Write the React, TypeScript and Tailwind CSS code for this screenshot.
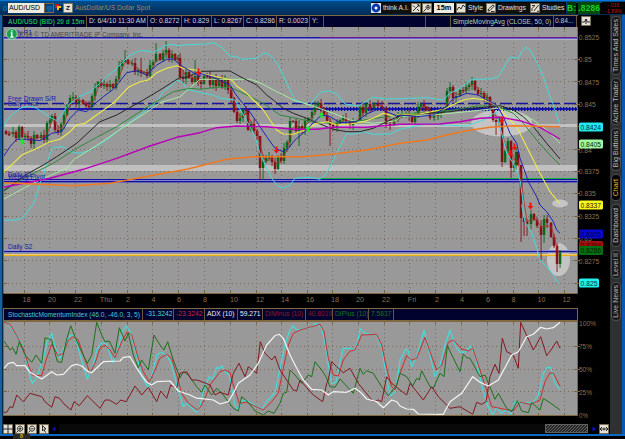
import React from "react";

type Piece = [number, number, string];

const FONT = "'Liberation Sans', Arial, sans-serif";

/* Each piece holds an origin and a list of points in thirds of a pixel. */
function toPoints(pieces: Piece[]): string {
  return pieces
    .map(([ox, oy, s]) =>
      s
        .trim()
        .split(/\s+/)
        .map((p) => {
          const [x, y] = p.split(",").map(Number);
          return `${(ox + x / 3).toFixed(1)},${(oy + y / 3).toFixed(1)}`;
        })
        .join(" ")
    )
    .join(" ");
}

interface Series {
  color: string;
  width: number;
  pieces: Piece[];
}

const overlays: Series[] = [
  { color: "#45dada", width: 1, pieces: [
    [0, 100, "10,78 30,50 60,25 90,18 110,25 155,55 170,62 185,45 200,20"],
    [0, 0, "232,293 270,275 300,250 320,230 345,210 365,190 390,165 420,152 440,153 460,157 480,147 495,137 515,133 540,137 560,134"],
    [200, 0, "0,133 20,132 40,128 60,138 90,168 110,170 125,178 170,175 190,160 200,160 215,170 235,195 260,250 285,300 330,315 345,295 365,275 390,273 410,282 435,312 475,318 520,292 560,297"],
    [400, 0, "0,296 80,293 130,300 150,280 180,265 215,238 270,237 295,230 310,205 330,172 355,175 365,155 378,142 390,150 410,185 430,230 450,290 458,310 468,340 480,375"]] },
  { color: "#45dada", width: 1, pieces: [
    [0, 205, "10,45 40,46 60,42 75,32 85,15 98,0"],
    [0, 100, "105,300 120,250 135,210 150,160 160,142 190,140 210,155 240,160 270,150 320,120 370,80 440,30"],
    [0, 0, "470,305 490,275 510,260 530,240 550,250 560,268 590,275"],
    [200, 0, "0,278 40,285 60,295 90,298"],
    [200, 100, "105,0 130,45 150,80 165,110 180,160 200,205 215,235 235,260 250,264 270,255 285,235 330,232 360,238 380,220 400,180 420,140 440,100 455,103 490,95 520,103 570,102"],
    [400, 100, "0,88 30,82 60,75 80,72 130,75 200,78 250,60 290,35 300,80 320,160 340,190 360,240 370,310"],
    [400, 205, "365,0 375,50 395,85 410,130 420,165 440,185 460,210 475,235"]] },
  { color: "#a8eaa0", width: 1, pieces: [
    [0, 100, "10,298 80,260 120,240 200,205 220,180 300,130 380,75 450,30 480,8"],
    [0, 0, "540,290 580,255"],
    [200, 0, "0,238 60,238 150,238 180,248 230,275 285,302 330,315"],
    [200, 100, "400,40 450,60 520,70 590,62"],
    [400, 100, "0,50 100,45 200,35 290,25 340,35 400,60 440,90 480,130"]] },
  { color: "#2c8a38", width: 1, pieces: [
    [0, 100, "10,275 60,240 110,215 160,190 230,145 290,112 350,80 420,35"],
    [0, 0, "460,310 520,275 570,265"],
    [200, 0, "0,268 50,262 90,262 120,275 160,295"],
    [200, 100, "190,10 240,45 290,55 330,65 400,70 480,62 560,50"],
    [400, 100, "0,42 80,38 160,30 230,18 290,18 340,40 370,70 410,120 450,165 480,195"]] },
  { color: "#26262a", width: 1, pieces: [
    [0, 100, "10,272 50,245 85,220 130,195 170,170 230,130 300,65 350,45"],
    [0, 0, "430,300 480,270 540,232 560,232 590,218"],
    [200, 0, "0,214 90,213 130,235 170,255 200,285"],
    [200, 100, "220,0 250,25 280,40 320,55 360,72 400,88 440,95 480,95 520,85 570,60"],
    [400, 100, "0,48 80,40 150,35 220,25 300,17 340,30 370,50 400,80 440,130 480,177"]] },
  { color: "#eeea48", width: 1.1, pieces: [
    [0, 100, "10,217 40,190 65,165 105,148 150,125 180,118 210,95 230,75 255,70 290,45"],
    [0, 0, "345,305 385,262 420,245 445,240 470,218 500,205 530,197 550,205 600,212"],
    [200, 0, "0,220 40,228 95,240 110,258 140,280"],
    [200, 100, "160,0 190,30 210,60 230,90 250,102 280,103 320,88 350,70 385,65 410,75 450,72 490,65 520,55 550,40 580,48"],
    [400, 100, "0,43 60,42 130,28 190,0 220,-5 255,0 290,15 320,50 350,80 380,140 420,220 450,275 480,312"]] },
  { color: "#2020b4", width: 1, pieces: [
    [0, 100, "10,170 30,140 50,118 80,118 120,122 155,100 185,95 210,55 235,30 260,35 280,15"],
    [0, 0, "310,290 340,268 355,250 380,218 410,212 440,225 470,195 500,178 520,177 545,198 575,215 600,230"],
    [200, 0, "0,220 40,232 90,255 105,280"],
    [200, 100, "120,0 145,30 170,65 200,110 225,145 250,155 265,145 285,120 320,90 340,68 365,45 390,50 420,68 470,65 500,42 540,25 560,35 590,48"],
    [400, 100, "0,45 50,50 100,45 140,20 160,-5 200,-20 235,-15 260,0 290,15 310,50 330,100 350,130 360,175 375,215 385,245 410,290"],
    [400, 205, "420,0 440,20 460,50 470,75 480,85"]] },
  { color: "#b800b8", width: 1.4, pieces: [
    [0, 100, "10,262 80,248 150,235 250,208 350,175 450,138 530,112"],
    [200, 100, "0,98 50,83 110,78 200,80 280,88 350,88 400,82 500,82"],
    [400, 100, "0,73 120,72 180,65 240,55 300,52 360,62 420,82 480,117"]] },
  { color: "#f07820", width: 1.4, pieces: [
    [0, 100, "10,248 100,252 220,257 330,250 400,237 480,222 560,208"],
    [200, 100, "0,198 80,178 160,170 310,170 400,162 500,150 560,138"],
    [400, 100, "0,130 80,120 140,105 200,92 270,82 340,77 480,80"]] },
];

const studies: Series[] = [
  { color: "#45dada", width: 1.2, pieces: [
    [0, 305, "12,52 25,55 45,85 65,115 80,170 90,215 97,235 110,218 130,160 140,115 155,85 165,125 180,160 195,120 212,90 225,95 240,150 262,222 280,180 290,135 305,112 320,118 338,172 355,130 365,85 378,62 390,80 410,150 425,215 445,248 460,195 470,150 482,142 500,150 515,180 530,240 550,305 560,295 590,322 600,305"],
    [200, 305, "8,265 15,245 28,215 38,222 50,188 60,190 66,182 75,200 88,210 95,250 105,300 115,315 125,285 145,290 185,312 205,285 225,262 240,190 255,120 268,80 278,62 290,75 330,68 350,55 365,70 378,130 388,200 395,235 408,232 420,170 430,130 450,130 465,137 475,100 480,70 495,85 530,90 545,130 560,220 570,272 585,262 598,185"],
    [400, 305, "0,165 18,132 25,138 35,185 50,155 72,75 85,130 105,215 120,180 135,120 150,75 165,120 180,142 200,140 210,122 225,150 245,240 262,300 278,330 290,308 305,325 320,312 333,328 345,290 370,295 400,292 415,270 430,205 440,188 452,187 465,235 480,255"]] },
  { color: "#c83030", width: 1, pieces: [
    [0, 305, "12,52 30,58 50,92 70,130 85,180 97,210 125,212 140,160 155,118 175,152 190,145 205,105 220,95 235,105 250,150 270,203 285,175 300,130 315,120 330,135 345,158 365,110 382,80 395,90 415,160 430,200 448,232 465,195 480,160 500,148 515,160 530,210 545,265 565,295 592,315"],
    [200, 305, "0,308 15,280 30,240 60,200 75,195 90,202 100,240 118,295 140,292 190,315 215,290 235,265 250,190 265,120 280,85 300,75 360,58 372,80 385,160 400,210 415,213 430,165 450,138 465,135 485,90 530,88 545,120 560,190 575,245 585,255"],
    [400, 305, "0,205 20,152 35,165 50,160 75,97 90,140 110,195 125,180 145,112 160,105 185,132 205,138 218,130 235,180 255,240 275,305 300,310 340,318 360,292 390,298 420,285 435,230 450,203 460,205 480,243"]] },
  { color: "#1c701c", width: 1, pieces: [
    [0, 305, "12,108 30,135 38,128 48,148 58,110 75,150 95,172 108,150 125,175 135,98 155,105 172,170 185,172 198,110 212,62 225,95 240,130 262,175 275,150 290,52 305,90 315,110 328,108 345,145 358,68 375,108 385,85 400,150 415,188 425,165 445,195 462,90 480,120 492,135 503,110 520,165 540,218 550,200 565,210 590,245"],
    [200, 305, "5,262 15,240 35,270 50,250 70,270 100,310 115,318 125,275 145,292 165,318 190,330 205,318 222,325 240,295 250,265 260,262 270,195 285,210 305,235 325,210 335,215 345,170 365,195 378,215 390,245 405,247 420,222 460,265 480,190 490,208 500,197 520,205 545,245 565,272 590,240"],
    [400, 305, "0,205 20,215 38,243 50,220 58,225 65,197 90,245 100,250 120,205 132,215 142,122 180,200 190,147 200,158 210,160 240,215 255,210 285,283 295,265 320,310 335,320 352,287 365,318 385,323 395,293 420,315 430,280 450,293 480,315"]] },
  { color: "#841820", width: 1, pieces: [
    [0, 305, "12,322 20,322 30,305 38,308 50,270 70,290 90,265 125,275 135,290 155,307 165,275 178,280 195,300 213,315 222,290 238,302 262,272 300,310 315,285 328,285 350,298 362,285 378,290 390,270 405,243 425,270 445,247 470,290 482,258 500,280 512,240 530,250 540,205 560,200 575,225 590,225"],
    [200, 305, "0,228 30,240 45,270 60,262 85,270 100,205 117,175 135,215 145,185 170,205 181,110 195,145 215,165 225,153 240,195 280,255 290,258 300,225 340,270 368,290 380,235 385,225 395,170 410,185 430,203 450,190 475,235 495,260 520,290 535,285 545,290 560,215 575,235"],
    [400, 305, "0,255 20,270 30,235 70,285 95,245 115,275 150,310 180,305 218,328 230,292 245,298 258,290 270,215 285,178 297,205 307,100 320,140 340,150 355,190 362,52 400,135 422,95 440,152 455,132 470,108 480,130"]] },
  { color: "#f4f4f4", width: 1.2, pieces: [
    [0, 305, "12,190 25,175 40,172 50,182 75,182 90,202 125,222 155,200 170,210 190,208 215,182 230,178 245,183 265,200 275,203 310,170 360,168 370,157 390,155 410,190 440,232 455,240 470,230 510,228 535,258 570,270 590,280"],
    [200, 305, "0,280 40,285 60,297 85,290 100,265 115,235 150,210 175,175 200,120 225,92 238,88 250,100 270,150 290,190 310,225 335,253 365,255 385,270 400,260 440,262 465,250 480,260 500,282 530,290 550,308 575,285 590,290"],
    [400, 305, "0,303 20,312 40,313 55,327 130,328 150,290 185,265 218,215 240,232 265,243 295,225 335,150 355,140 380,95 400,88 422,67 440,72 460,68 480,52"]] },
];

const closes =
  "3:131 6:134 9:134 13:132 16:138 19:127 22:137 25:136 28:138 31:144 34:135 37:138 41:135 44:140 47:123 50:120 52:116 55:130 58:132 61:124 64:115 67:105 70:98 73:97 76:103 79:100 83:104 86:106 89:107 92:96 95:87 98:82 101:86 104:84 107:87 110:84 113:88 116:79 119:66 122:62 125:60 128:64 132:63 135:72 138:70 141:73 144:72 147:76 150:65 153:62 156:54 160:60 163:53 166:50 169:58 172:54 175:60 178:58 180:77 183:79 186:72 189:78 192:82 195:76 198:82 201:84 204:76 207:76 210:85 213:78 216:86 219:78 222:87 225:80 228:90 231:98 234:112 237:121 240:118 243:110 246:110 248:130 251:124 254:131 257:136 260:168 263:161 266:158 269:157 272:162 275:169 278:156 281:161 284:148 287:142 290:121 293:121 296:131 299:126 302:130 305:121 308:118 312:112 315:106 318:103 321:108 324:115 327:121 330:125 333:127 337:123 340:120 343:118 346:121 350:125 353:122 356:121 360:107 363:113 366:104 370:108 374:103 378:106 382:108 386:124 390:125 394:120 398:115 402:114 406:113 409:116 412:122 415:115 418:107 421:104 424:107 427:110 430:118 434:116 438:113 441:112 444:108 447:91 450:87 453:98 456:96 460:90 463:91 466:87 469:85 472:81 475:90 478:94 481:93 484:98 487:97 490:108 493:120 496:122 499:118 502:162 505:151 508:141 511:168 514:165 516:152 518:165 521:218 524:222 527:224 531:214 534:220 537:226 541:235 544:219 547:223 551:237 554:246 557:264 560:252"
    .split(" ")
    .map((s) => s.split(":").map(Number));

const bigWicks: Record<number, [number, number]> = {
  19: [125, 139], 52: [114, 121], 125: [50, 62], 141: [58, 77], 156: [43, 60], 166: [41, 58], 183: [70, 84],
  195: [60, 84], 260: [140, 180], 263: [155, 180], 299: [120, 146], 330: [118, 146],
  502: [122, 167], 511: [140, 178], 521: [172, 242], 524: [217, 236], 527: [219, 236], 541: [220, 260],
  544: [215, 243], 557: [243, 272], 560: [250, 268], 496: [115, 135],
};

const vGrid = [24.5, 49.5, 75.5, 101.5, 127.5, 152.5, 178.5, 204.5, 230.5, 256.5, 281.5, 307.5, 332.5, 358.5, 384.5, 409.5, 435.5, 461.5, 487.5, 513.5, 538.5, 564.5];
const hGrid = [59.5, 81.5, 104.5, 126.5, 149.5, 171.5, 193.5, 216.5, 238.5, 260.5, 283.5];

const hours: [string, number][] = [
  ["18", 26.5], ["20", 52], ["22", 78], ["Thu", 106], ["2", 128], ["4", 153.5], ["6", 179], ["8", 205], ["10", 234], ["12", 260], ["14", 285],
  ["16", 310], ["18", 335], ["20", 360], ["22", 386], ["Fri", 412], ["2", 437], ["4", 462], ["6", 488], ["8", 513.5], ["10", 541.5], ["12", 566.5],
];

const prices: [string, number][] = [
  ["0.8525", 37.3], ["0.85", 59.5], ["0.8475", 82], ["0.845", 104.3], ["0.84", 150], ["0.8375", 171.8], ["0.835", 193.7], ["0.8325", 216.6], ["0.83", 238.8], ["0.8275", 261],
];

const tags: [string, number, string, string, number][] = [
  ["0.8424", 127, "#20e8f0", "#003040", 24],
  ["0.8405", 144, "#a0f8a0", "#083008", 24],
  ["0.8337", 205, "#f8f820", "#202000", 24],
  ["0.8305", 234, "#0808d0", "#000050", 24],
  ["0.8294", 245.5, "#a01010", "#400000", 24],
  ["0.8286", 250.5, "#087010", "#001c00", 24],
  ["0.825", 283, "#20f0f0", "#003040", 20],
];

const len: Record<number, number> = { 4: 13, 5: 17, 6: 20.5 };

function Arrow({ x, y, up }: { x: number; y: number; up?: boolean }) {
  return (
    <path
      d={up ? "M0,-3 L3,0 H1.2 V3 H-1.2 V0 H-3 Z" : "M0,3.5 L3,0 H1 V-3.5 H-1 V0 H-3 Z"}
      transform={`translate(${x},${y})`}
      fill={up ? "#18e828" : "#f01010"}
    />
  );
}

function PriceChart() {
  return (
    <svg width="607" height="280" viewBox="3 27 607 280" className="block shrink-0" fontFamily={FONT}>
      <rect x="3" y="27" width="607" height="280" fill="#000" />
      <rect x="3.5" y="27" width="574" height="266" fill="#999999" />
      <g stroke="#6c5840" strokeWidth="1" strokeDasharray="1 3" opacity="0.7">
        {vGrid.map((x) => <line key={x} x1={x} x2={x} y1="27" y2="293" />)}
        {hGrid.map((y) => <line key={y} x1="4" x2="577" y1={y} y2={y} />)}
      </g>
      <g stroke="#7a6038">
        {vGrid.map((x) => <path key={x} d={`M${x},27v3M${x},290v3`} />)}
        {hGrid.map((y) => <path key={y} d={`M4,${y}h3M574,${y}h6`} />)}
      </g>
      <rect x="4" y="124" width="573" height="3" fill="#c2c2c2" />
      <rect x="4" y="165" width="573" height="6" fill="#c0c0c0" />
      <ellipse cx="501.7" cy="123" rx="30.5" ry="13.5" fill="#c4c4c4" />
      <ellipse cx="560" cy="203.5" rx="8" ry="4" fill="#c4c4c4" />
      <ellipse cx="558.5" cy="259.5" rx="11.5" ry="16.5" fill="#c4c4c4" />

      <rect x="4" y="37" width="573" height="1" fill="#1818a8" />
      <rect x="4" y="38" width="573" height="1" fill="#6a62c0" />
      <rect x="320" y="37" width="257" height="1" fill="#6c1890" />
      <rect x="4" y="39" width="573" height="1" fill="#b4b0c8" />
      <line x1="4" x2="577" y1="103.5" y2="103.5" stroke="#1414a0" strokeWidth="1.4" strokeDasharray="12 4" />
      <rect x="4" y="108" width="573" height="2" fill="#1616b0" />
      <line x1="320" x2="577" y1="109" y2="109" stroke="#1010a0" strokeWidth="4" strokeDasharray="1.3 1.7" />
      <rect x="320" y="178" width="257" height="1" fill="#10b838" />
      <rect x="4" y="179" width="573" height="1" fill="#1414a0" />
      <rect x="4" y="180" width="573" height="1" fill="#8484cc" />
      <rect x="4" y="181" width="573" height="1" fill="#1010a0" />
      <rect x="4" y="182" width="573" height="1" fill="#6464b0" />
      <rect x="4" y="250" width="573" height="1" fill="#8c8cd0" />
      <rect x="4" y="251" width="573" height="1" fill="#141498" />
      <rect x="4" y="252" width="573" height="1" fill="#8484b8" />
      <rect x="4" y="254" width="573" height="1" fill="#e8cc78" />
      <rect x="4" y="255" width="573" height="1" fill="#eeae18" />

      {closes.slice(1).map(([x, y], i) => {
        const prev = closes[i][1];
        const w = bigWicks[x];
        const top = Math.min(prev, y);
        const bottom = Math.max(prev, y);
        const hi = w ? w[0] : top - 1 - ((i * 7) % 5);
        const lo = w ? w[1] : bottom + 1 + ((i * 11) % 5);
        const color = y < prev ? "#086818" : "#841018";
        return (
          <g key={i} fill={color}>
            <rect x={x - 0.4} y={hi} width="0.9" height={lo - hi} />
            <rect x={x - 1.2} y={top} width="2.5" height={Math.max(1.2, bottom - top)} />
          </g>
        );
      })}
      <polyline
        points={closes.slice(1).map(([x, y], i) => `${x},${(y + closes[i][1] + closes[Math.max(0, i - 1)][1]) / 3}`).join(" ")}
        fill="none" stroke="#b42828" strokeWidth="0.8" />
      {overlays.map((s, i) => (
        <polyline key={i} points={toPoints(s.pieces)} fill="none" stroke={s.color} strokeWidth={s.width} strokeLinejoin="round" />
      ))}

      <Arrow x={22} y={141.5} up />
      <Arrow x={308} y={129} up />
      <Arrow x={321.5} y={115} up />
      <Arrow x={198.5} y={72} />
      <Arrow x={276.5} y={150} />
      <Arrow x={501.7} y={120} />
      <Arrow x={514.5} y={147} />
      <Arrow x={510.5} y={153.5} />
      <Arrow x={530.5} y={206} />

      <g fontSize="7.2" fill="#1818a8">
        <text x="8" y="34.5" textLength="24" lengthAdjust="spacingAndGlyphs">Daily R1</text>
        <text x="8" y="100.8" textLength="48" lengthAdjust="spacingAndGlyphs">Free Drawn S/R</text>
        <text x="8" y="106.3" textLength="30" lengthAdjust="spacingAndGlyphs">Daily Pivot</text>
        <text x="8" y="177" textLength="24" lengthAdjust="spacingAndGlyphs">Daily S1</text>
        <text x="8" y="179.3" textLength="37" lengthAdjust="spacingAndGlyphs">Weekly Pivot</text>
        <text x="8" y="249.3" textLength="24.5" lengthAdjust="spacingAndGlyphs">Daily S2</text>
      </g>
      <text x="18" y="36.8" fontSize="6.8" fill="#484848" textLength="125" lengthAdjust="spacingAndGlyphs">2010 © TD AMERITRADE IP Company, Inc.</text>
      <circle cx="11.8" cy="34" r="5.4" fill="#18a050" stroke="#a8d8b8" strokeWidth="0.8" />
      <path d="M11.8,30.2v1.3M10.7,33h1.1v4M10.3,37h3.2" stroke="#fff" strokeWidth="1.4" fill="none" />

      <path d="M3.5,27V293.5H577.5V27" fill="none" stroke="#806840" strokeWidth="1" />
      <g fill="#8c7050" fontSize="7">
        {prices.map(([t, y]) => <text key={t} x="578.8" y={y + 2.5} textLength={len[t.length]} lengthAdjust="spacingAndGlyphs">{t}</text>)}
        {hours.map(([t, x], i) => <text key={i} x={x} y="302.2" fontSize="7.2" textAnchor="middle">{t}</text>)}
      </g>
      {tags.map(([t, y, bg, fg, w]) => (
        <g key={t}>
          <rect x="579" y={y - 4.6} width={w} height="9.2" rx="1.6" fill={bg} />
          <text x="580.5" y={y + 2.5} fontSize="7" fill={fg} textLength={len[t.length]} lengthAdjust="spacingAndGlyphs">{t}</text>
        </g>
      ))}
    </svg>
  );
}

function StudyChart() {
  return (
    <svg width="607" height="102" viewBox="3 321 607 102" className="block shrink-0" fontFamily={FONT}>
      <rect x="3.5" y="321" width="574" height="95" fill="#999999" />
      <g stroke="#6c5840" strokeDasharray="1 3" opacity="0.7">
        {vGrid.map((x) => <line key={x} x1={x} x2={x} y1="321" y2="416" />)}
        {[346.5, 369.5, 391.5].map((y) => <line key={y} x1="4" x2="577" y1={y} y2={y} />)}
      </g>
      <g stroke="#7a6038">
        {vGrid.map((x) => <path key={x} d={`M${x},321v3M${x},413v3`} />)}
        {[346.5, 369.5, 391.5].map((y) => <path key={y} d={`M4,${y}h3M574,${y}h6`} />)}
      </g>
      {studies.map((s, i) => (
        <polyline key={i} points={toPoints(s.pieces)} fill="none" stroke={s.color} strokeWidth={s.width} strokeLinejoin="round" />
      ))}
      <path d="M3.5,321.5H577.5V415.5H3.5Z" fill="none" stroke="#806840" />
      <g fill="#8c7050" fontSize="7">
        <text x="579" y="326" textLength="17" lengthAdjust="spacingAndGlyphs">100%</text>
        <text x="579" y="349" textLength="13" lengthAdjust="spacingAndGlyphs">75%</text>
        <text x="579" y="372" textLength="13" lengthAdjust="spacingAndGlyphs">50%</text>
        <text x="579" y="394.5" textLength="13" lengthAdjust="spacingAndGlyphs">25%</text>
        <text x="579" y="417.5" textLength="9" lengthAdjust="spacingAndGlyphs">0%</text>
      </g>
    </svg>
  );
}

function Cell({ w, children, className = "" }: { w: number; children?: React.ReactNode; className?: string }) {
  return (
    <div className={`flex h-full shrink-0 items-center whitespace-nowrap border-r border-[#66553c] ${className}`} style={{ width: w }}>
      {children}
    </div>
  );
}

function ToolButton({ w, label, icon }: { w: number; label: string; icon: React.ReactNode }) {
  return (
    <div className="flex h-[11px] shrink-0 items-center bg-[#101010] text-[6.7px] text-[#e0e0e0]" style={{ width: w }}>
      {icon}
      <span className="whitespace-nowrap pl-[2px]">{label}</span>
    </div>
  );
}

function Glyph({ d, bg = "#e4e0d4" }: { d: string; bg?: string }) {
  return (
    <svg width="10" height="10" viewBox="0 0 10 10" className="shrink-0">
      <rect x="0.5" y="0.5" width="9" height="9" fill={bg} stroke="#807050" strokeWidth="0.6" />
      <path d={d} fill="none" stroke="#181818" strokeWidth="0.9" />
    </svg>
  );
}

function TitleBar() {
  return (
    <div className="flex h-[15px] shrink-0 items-center border-t border-[#0878d8] bg-linear-to-b from-[#004c8a] to-[#002c58] pl-[3px]">
      <div className="h-[5px] w-[4px] shrink-0 rounded-full border border-[#1870b8]" />
      <div className="ml-[1px] flex h-[10px] w-[36px] shrink-0 items-center bg-[#eeeadc] pl-px text-[6.9px] text-black">AUD/USD</div>
      <div className="flex h-[10px] w-[10px] shrink-0 items-center justify-center border border-[#806840] bg-[#003f7c]">
        <svg width="7" height="7" viewBox="0 0 7 7"><path d="M0.5,2h6M0.5,4h6M2.5,6h2" stroke="#1878b8" /></svg>
      </div>
      <svg width="8" height="8" viewBox="0 0 8 8" className="ml-[1px] shrink-0">
        <rect x="0" y="0" width="4" height="4" fill="#d01818" />
        <rect x="2" y="2" width="4" height="4" fill="#f0c020" />
        <rect x="4" y="4" width="3" height="3" fill="#101010" />
      </svg>
      <div className="flex items-center"><Glyph d="M3,6.5L7,3M3.5,3.5H6M4,6.5H6.5" /></div>
      <div className="ml-[2px] w-[97px] whitespace-nowrap text-[6.7px] text-[#a08860]">AusDollar/US Dollar Spot</div>
      <div className="flex-1" />
      <div className="flex h-[12px] w-[195px] shrink-0 items-center bg-black">
        <ToolButton w={40} label="think A.I." icon={
          <svg width="10" height="10" viewBox="0 0 10 10" className="shrink-0"><rect width="10" height="10" fill="#d8e0f0" /><circle cx="5" cy="5" r="4.4" fill="#0838a8" /><circle cx="5" cy="5" r="1.5" fill="#fff" /></svg>
        } />
        <Glyph d="M2,8L8,2M2,2.5L4,4.5M6,6L8,8M6,1.8H8V4" />
        <div className="ml-[1px] flex"><Glyph d="M1.5,8.5L4,6M6,2.3a2,2 0 1 0 0.1,0M5,4.3H7M6,3.3V5.3" /></div>
        <div className="ml-[2px] flex h-[10px] w-[20px] items-center justify-center bg-[#eeeadc] text-[7.4px] font-bold text-black">15m</div>
        <div className="ml-[2px] flex"><ToolButton w={30} label="Style" icon={<Glyph d="M1,7L3,4L5,6L7,2L9,4" />} /></div>
        <ToolButton w={44} label="Drawings" icon={<Glyph d="M2,8L2.5,6L7,1.8L8.3,3L4,7.5ZM5,8.5H8.5" />} />
        <ToolButton w={35} label="Studies" icon={<Glyph d="M2,8V5.5L4.5,3M2,2.5H5M4,8L8.5,2M7,8.3H9" />} />
      </div>
      <div className="ml-[1px] flex h-[11px] w-[35px] shrink-0 items-center whitespace-nowrap bg-black text-[8.4px] font-bold tracking-[0.2px] text-[#18d028]">
        <span className="bg-[#003808]">B:</span><span className="ml-[2px] bg-[#004a0e]">.8286</span>
      </div>
      <div className="flex w-[23px] shrink-0 flex-col items-center bg-black text-[5.2px] leading-[6px] text-[#c01818]">
        <span>-.016</span>
        <span>-1.89%</span>
      </div>
    </div>
  );
}

function QuoteRow() {
  return (
    <div className="flex h-[12px] w-[607px] shrink-0 items-center bg-black">
      <div className="flex h-full w-[575px] items-center border-t border-[#806840] bg-[#02022e] text-[6.7px] text-[#d8d8d8]">
        <Cell w={84} className="pl-[5px] text-[6.5px] font-bold text-[#18b050]">AUD/USD (BID) 20 d 15m</Cell>
        <Cell w={61} className="pl-[2px] text-[6.7px]">D: 6/4/10 11:30 AM</Cell>
        <Cell w={34} className="pl-[2px]">O: 0.8272</Cell>
        <Cell w={30} className="pl-[2px]">H: 0.829</Cell>
        <Cell w={32} className="pl-[2px]">L: 0.8267</Cell>
        <Cell w={33} className="pl-[2px]">C: 0.8286</Cell>
        <Cell w={33} className="pl-[2px]">R: 0.0023</Cell>
        <Cell w={14} className="pl-[2px]">Y:</Cell>
        <Cell w={102} />
        <Cell w={25} />
        <Cell w={103} className="pl-[2px] text-[6.5px] text-[#b4d4b4]">SimpleMovingAvg (CLOSE, 50, 0)</Cell>
        <Cell w={23} className="pl-[1px] text-[#b4d4b4]">0.84...</Cell>
      </div>
      <div className="ml-[3px] flex"><Glyph d="M1,6H3.5L5,3L6.5,6H9M5,3V8" /></div>
    </div>
  );
}

function StudyHeader() {
  return (
    <div className="mt-[1px] flex h-[13px] w-[575px] shrink-0 items-center border border-[#806840] bg-[#02022e] text-[6.7px] text-[#f0f0f0]">
      <Cell w={139} className="pl-[4px] text-[6.6px] text-[#48c8d8]">StochasticMomentumIndex (46.0, -46.0, 3, 5)</Cell>
      <Cell w={31} className="pl-[3px] text-[#48d8e8]">-31.3242</Cell>
      <Cell w={31} className="pl-[2px] text-[#c82838]">-23.3242</Cell>
      <Cell w={33} className="pl-[2px]">ADX (10)</Cell>
      <Cell w={25} className="pl-[2px]">59.271</Cell>
      <Cell w={43} className="pl-[2px] text-[#8c1c28]">DIMinus (10)</Cell>
      <Cell w={27} className="pl-[2px] text-[#8c1c28]">40.8019</Cell>
      <Cell w={36} className="pl-[2px] text-[#187424]">DIPlus (10)</Cell>
      <Cell w={25} className="pl-[2px] text-[#187424]">7.5837</Cell>
    </div>
  );
}

function BottomBar() {
  return (
    <div className="flex h-[11px] w-[607px] shrink-0 items-center bg-black">
      <div className="flex gap-[2px]">
        <Glyph d="M5,0V10M0,5H10" />
        <Glyph d="M5,2a2.6,2.6 0 1 0 0.1,0M3.5,4.8H6.5M5,3.3V6.3M1.5,8.5L3,7" />
        <Glyph d="M5,2a2.6,2.6 0 1 0 0.1,0M3.5,4.8H6.5M1.5,8.5L3,7" />
        <Glyph d="M3.5,1.5V7L5,5.5L6.5,8.5M3.5,1.5L7,5H5" />
      </div>
      <svg width="6" height="6" viewBox="0 0 6 6" className="ml-[2px]"><path d="M4.5,0.5V5.5L1,3Z" fill="#1010b0" /></svg>
      <div className="ml-[2px] h-[9px] w-[486px] bg-[#090909]" />
      <svg width="43" height="9" viewBox="0 0 43 9" className="shrink-0">
        <defs>
          <pattern id="grip" width="3" height="3" patternUnits="userSpaceOnUse">
            <path d="M0,3L3,0" stroke="#707070" strokeWidth="0.8" />
          </pattern>
        </defs>
        <rect width="43" height="9" fill="#262626" />
        <rect width="43" height="9" fill="url(#grip)" />
        <rect x="0.5" y="0.5" width="42" height="8" fill="none" stroke="#606060" />
      </svg>
      <svg width="6" height="6" viewBox="0 0 6 6" className="ml-[3px]"><path d="M1.5,0.5V5.5L5,3Z" fill="#1010d8" /></svg>
      <div className="ml-[2px] flex"><Glyph d="M1,5H9M3,3L1,5L3,7M7,3L9,5L7,7M5,3.5V6.5" /></div>
    </div>
  );
}

const sideTabs: [string, number, boolean][] = [
  ["Times And Sales", 59, false],
  ["Active Trader", 47, false],
  ["Big Buttons", 43, false],
  ["Chart", 27, true],
  ["Dashboard", 43, false],
  ["Level II", 29, false],
  ["Live News", 39, false],
];

function Sidebar() {
  return (
    <div className="flex w-[12px] shrink-0 flex-col items-center gap-[3px] bg-[#2e3031] pt-[1px]">
      {sideTabs.map(([label, h, active]) => (
        <div
          key={label}
          className={`flex w-[10px] shrink-0 items-center justify-center rounded-[4px] border border-[#4c4e50] ${active ? "bg-black text-[#e8b828]" : "bg-[#191a1b] text-[#b8b8b8]"}`}
          style={{ height: h }}
        >
          <span className="rotate-180 whitespace-nowrap text-[7.1px] leading-[9px] [writing-mode:vertical-rl]">{label}</span>
        </div>
      ))}
    </div>
  );
}

export default function App() {
  return (
    <div className="flex h-[439px] w-[625px] flex-col overflow-hidden bg-black" style={{ fontFamily: FONT }}>
      <TitleBar />
      <div className="flex h-[419px] shrink-0">
        <div className="w-[3px] shrink-0 border-r border-[#082848] bg-[#1560a0]" />
        <div className="flex w-[607px] shrink-0 flex-col">
          <QuoteRow />
          <PriceChart />
          <StudyHeader />
          <StudyChart />
          <BottomBar />
        </div>
        <Sidebar />
        <div className="w-[3px] shrink-0 bg-[#0858b8]" />
      </div>
      <div className="flex h-[5px] shrink-0 border-t-2 border-[#0c68c0] bg-black">
        <div className="-mt-[2px] ml-[13px] flex h-[5px] w-[17px] items-center justify-center bg-[#282828] text-[6px] font-bold leading-[5px] text-[#c8a020]">8</div>
      </div>
    </div>
  );
}
